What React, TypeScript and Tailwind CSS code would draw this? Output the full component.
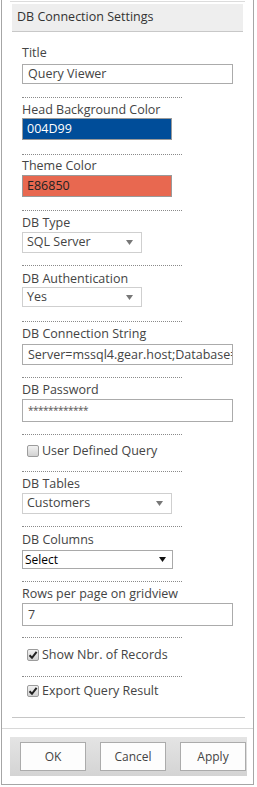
import React from "react";

function Label({ text, className = "" }: { text: string; className?: string }) {
  return <div className={"h-[16px] leading-[16px] text-[12.5px] text-[#444] whitespace-nowrap " + className}>{text}</div>;
}

function Dots({ className = "" }: { className?: string }) {
  return <div className={"w-[160px] border-t border-dotted border-[#8a8a8a] " + className} />;
}

function Arrow({ color }: { color: string }) {
  return (
    <svg width="7" height="5" viewBox="0 0 7 5">
      <path d="M0 0 L7 0 L3.5 5 Z" fill={color} />
    </svg>
  );
}

function Check({ checked }: { checked: boolean }) {
  return (
    <div className="w-[12px] h-[12px] rounded-[2px] border border-[#9c9c9c] bg-linear-to-b from-[#f2f2f2] to-[#d2d2d2] flex items-center justify-center">
      {checked && (
        <svg width="10" height="10" viewBox="0 0 10 10">
          <path d="M1.5 5.2 L4 7.8 L8.6 1.8" stroke="#222" strokeWidth="2" fill="none" />
        </svg>
      )}
    </div>
  );
}

function CheckRow({ text, checked, className = "" }: { text: string; checked: boolean; className?: string }) {
  return (
    <div className={"h-[16px] flex items-center pl-[5px] gap-[3px] " + className}>
      <Check checked={checked} />
      <span className="leading-[16px] text-[12.5px] text-[#444] whitespace-nowrap">{text}</span>
    </div>
  );
}

export default function App() {
  return (
    <div className="w-[257px] h-[787px] bg-white font-['Open_Sans',sans-serif]">
      <div className="ml-[1px] w-[253px] h-[785px] border-x border-b border-[#a6a6a6] flex flex-col">
        <div className="mx-[8px] mt-[1px] border-t border-[#dcdcdc]" />
        <div className="mt-[2px] mx-[10px] h-[28px] bg-[#eeeeee] border-b border-[#c8c8c8] pl-[5px] flex items-center text-[12.5px] text-[#333] whitespace-nowrap">
          DB Connection Settings
        </div>

        <div className="pl-[20px] flex flex-col">
          <Label text="Title" className="mt-[13px]" />
          <div className="mt-[3px] w-[211px] h-[20px] border border-[#ababab] px-[5px] text-[12.5px] leading-[18px] text-[#444] whitespace-nowrap overflow-hidden">
            Query Viewer
          </div>
          <Dots className="mt-[13px]" />

          <Label text="Head Background Color" className="mt-[4px]" />
          <div className="w-[150px] h-[22px] border border-[#9a9a9a] bg-[#004D99] px-[4px] text-[12.5px] leading-[20px] text-white">
            004D99
          </div>
          <Dots className="mt-[14px]" />

          <Label text="Theme Color" className="mt-[3px]" />
          <div className="mt-[1px] w-[150px] h-[22px] border border-[#9a9a9a] bg-[#E86850] px-[4px] text-[12.5px] leading-[20px] text-[#222]">
            E86850
          </div>
          <Dots className="mt-[13px]" />

          <Label text="DB Type" className="mt-[4px]" />
          <div className="mt-[1px] w-[120px] h-[21px] border border-[#cfcfcf] bg-white pl-[4px] pr-[8px] flex items-center justify-between text-[12.5px] text-[#444]">
            <span>SQL Server</span>
            <Arrow color="#777" />
          </div>
          <Dots className="mt-[12px]" />

          <Label text="DB Authentication" className="mt-[5px]" />
          <div className="w-[120px] h-[20px] border border-[#cfcfcf] bg-white pl-[4px] pr-[8px] flex items-center justify-between text-[12.5px] text-[#444]">
            <span>Yes</span>
            <Arrow color="#777" />
          </div>
          <Dots className="mt-[14px]" />

          <Label text="DB Connection String" className="mt-[4px]" />
          <div className="mt-[2px] w-[211px] h-[21px] border border-[#ababab] px-[5px] text-[12.5px] leading-[19px] text-[#444] whitespace-nowrap overflow-hidden">
            Server=mssql4.gear.host;Database=QueryViewer
          </div>
          <Dots className="mt-[12px]" />

          <Label text="DB Password" className="mt-[4px]" />
          <div className="mt-[1px] w-[211px] h-[23px] border border-[#ababab] px-[5px] text-[10px] leading-[21px] text-[#555] whitespace-nowrap overflow-hidden tracking-[-0.5px]">
            ************
          </div>
          <Dots className="mt-[12px]" />

          <CheckRow text="User Defined Query" checked={false} className="mt-[8px]" />
          <Dots className="mt-[12px]" />

          <Label text="DB Tables" className="mt-[4px]" />
          <div className="mt-[1px] w-[150px] h-[21px] border border-[#cfcfcf] bg-white pl-[4px] pr-[8px] flex items-center justify-between text-[12.5px] text-[#444]">
            <span>Customers</span>
            <Arrow color="#777" />
          </div>
          <Dots className="mt-[12px]" />

          <Label text="DB Columns" className="mt-[5px]" />
          <div className="mt-[2px] w-[151px] h-[19px] border border-[#a9a9a9] bg-white pl-[2px] pr-[6px] flex items-center justify-between text-[12px] text-black">
            <span>Select</span>
            <Arrow color="#111" />
          </div>
          <Dots className="mt-[12px]" />

          <Label text="Rows per page on gridview" className="mt-[4px]" />
          <div className="mt-[1px] w-[211px] h-[23px] border border-[#ababab] px-[5px] text-[12.5px] leading-[21px] text-[#444]">
            7
          </div>
          <Dots className="mt-[11px]" />

          <CheckRow text="Show Nbr. of Records" checked={true} className="mt-[9px]" />
          <Dots className="mt-[13px]" />

          <CheckRow text="Export Query Result" checked={true} className="mt-[6px]" />
        </div>

        <div className="ml-[10px] mr-[8px] mt-[18px] border-t border-[#c6c6c6]" />
        <div className="mt-[10px] border-t border-[#d8d8d8]" />
        <div className="mt-[8px] ml-[8px] mr-[6px] h-[39px] bg-linear-to-b from-[#e4e4e4] to-[#d4d4d4] pl-[10px] pt-[5px] flex gap-[14px]">
          {["OK", "Cancel", "Apply"].map((b) => (
            <div key={b} className="w-[66px] h-[29px] bg-[#fdfdfd] border border-[#ababab] flex items-center justify-center text-[12px] text-[#444]">
              {b}
            </div>
          ))}
        </div>
      </div>
    </div>
  );
}
